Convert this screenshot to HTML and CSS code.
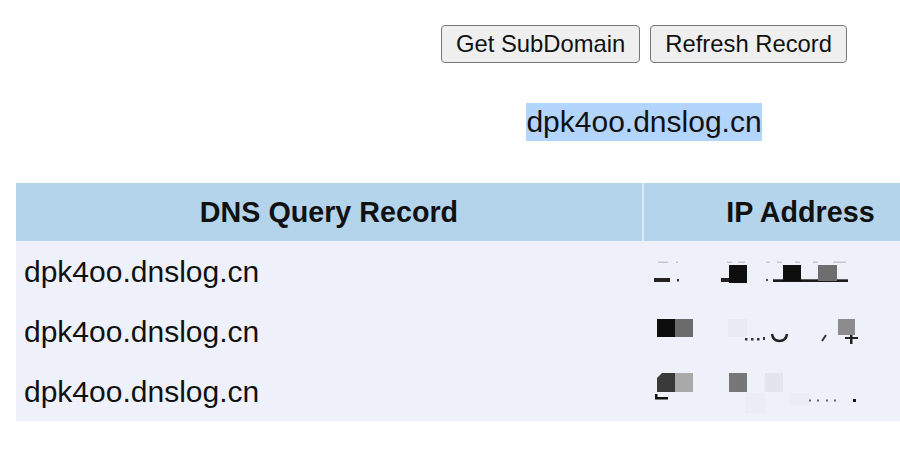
FILE: index.html
```html
<!DOCTYPE html>
<html lang="en">
<head>
<meta charset="utf-8">
<title>DNSLog</title>
<link rel="stylesheet" href="styles.css">
</head>
<body>
<div class="page">
  <div class="actions">
    <button class="btn" type="button">Get SubDomain</button><button class="btn" type="button">Refresh Record</button>
  </div>
  <div class="domain"><span class="selected">dpk4oo.dnslog.cn</span></div>
  <table class="records">
    <colgroup><col class="col-domain"><col class="col-ip"></colgroup>
    <thead>
      <tr><th class="th-domain">DNS Query Record</th><th>IP Address</th></tr>
    </thead>
    <tbody>
      <tr>
        <td class="cell-domain">dpk4oo.dnslog.cn</td>
        <td class="cell-ip">
          <svg class="redact" width="230" height="60" viewBox="0 0 230 60">
            <g fill="#c4c6cc">
              <rect x="14" y="20.5" width="10" height="1.5"/><rect x="32" y="20.5" width="2" height="1.5"/>
              <rect x="83" y="20.5" width="5" height="1.5"/><rect x="94" y="20.5" width="7" height="1.5"/>
              <rect x="122" y="20.5" width="4" height="1.5"/><rect x="133" y="20.5" width="5" height="1.5"/>
              <rect x="151" y="20.5" width="5" height="1.5"/><rect x="169" y="20.5" width="5" height="1.5"/>
              <rect x="189" y="20.5" width="13" height="1.5"/>
            </g>
            <rect x="10" y="37" width="16" height="4" fill="#222"/>
            <rect x="33" y="38" width="2" height="2.5" fill="#333"/>
            <rect x="77" y="37" width="14" height="4" fill="#222"/>
            <rect x="85" y="24" width="18" height="18" fill="#0e0e0e"/>
            <rect x="129" y="38.3" width="75" height="2.7" fill="#1c1c1c"/>
            <rect x="139" y="24" width="18" height="16" fill="#0e0e0e"/>
            <rect x="174" y="24" width="19" height="16" fill="#6e6e6e"/>
            <rect x="122" y="38" width="2" height="2" fill="#555"/>
          </svg>
        </td>
      </tr>
      <tr>
        <td class="cell-domain">dpk4oo.dnslog.cn</td>
        <td class="cell-ip">
          <svg class="redact" width="230" height="60" viewBox="0 0 230 60">
            <rect x="13" y="18" width="18" height="18" fill="#0d0d0d"/>
            <rect x="31" y="18" width="18" height="18" fill="#6b6b6b"/>
            <rect x="84" y="18" width="19" height="18" fill="#e8ebf3"/>
            <g fill="#333">
              <rect x="101" y="37" width="2.5" height="2.5"/><rect x="107" y="37" width="2.5" height="2.5"/>
              <rect x="113" y="37" width="2.5" height="2.5"/><rect x="119" y="36" width="2" height="3"/>
            </g>
            <path d="M128 33 Q129 40 135.5 40 Q142 40 143 33" fill="none" stroke="#222" stroke-width="2.5"/>
            <path d="M182 34 L178 40" fill="none" stroke="#333" stroke-width="2"/>
            <rect x="201" y="36" width="13" height="2" fill="#222"/>
            <rect x="206" y="33" width="2.5" height="10" fill="#222"/>
            <rect x="194" y="18" width="17" height="16" fill="#8c8c8c"/>
          </svg>
        </td>
      </tr>
      <tr>
        <td class="cell-domain">dpk4oo.dnslog.cn</td>
        <td class="cell-ip">
          <svg class="redact" width="230" height="60" viewBox="0 0 230 60">
            <path d="M13 17 L18 12 L31 12 L31 31 L13 31 Z" fill="#3a3a3a"/>
            <rect x="31" y="12" width="18" height="19" fill="#a9a9a9"/>
            <rect x="11" y="33" width="2.5" height="5" fill="#111"/>
            <rect x="11" y="36" width="13" height="2.5" fill="#111"/>
            <rect x="85" y="12" width="18" height="19" fill="#777"/>
            <rect x="121" y="12" width="18" height="19" fill="#e3e5ed"/>
            <rect x="101" y="32" width="20" height="20" fill="#ebedf5"/>
            <rect x="145" y="32" width="20" height="12" fill="#ebedf5"/>
            <g fill="#666">
              <rect x="165" y="38.5" width="2" height="2"/><rect x="173" y="38.5" width="2" height="2"/>
              <rect x="182" y="38.5" width="2" height="2"/><rect x="190" y="38.5" width="2" height="2"/>
            </g>
            <rect x="209" y="38" width="3" height="3" fill="#111"/>
          </svg>
        </td>
      </tr>
    </tbody>
  </table>
</div>
</body>
</html>
```

FILE: styles.css
```css
html, body {
  margin: 0;
  padding: 0;
  overflow: hidden;
  background: #ffffff;
}

body {
  font-family: "Liberation Sans", Arial, Helvetica, sans-serif;
  color: #111111;
}

.page {
  width: 1256px;
  padding: 25px 16px 0 16px;
  text-align: center;
}

.actions {
  display: flex;
  justify-content: center;
  gap: 10px;
}

.btn {
  font-family: "Liberation Sans", Arial, Helvetica, sans-serif;
  font-size: 23.8px;
  color: #111111;
  height: 38px;
  padding: 0 14px;
  background: #efefef;
  border: 1px solid #767676;
  border-radius: 4px;
  line-height: 36px;
}

.domain {
  margin-top: 40px;
  height: 38px;
  font-size: 30px;
}

.selected {
  display: inline-block;
  background: #b4d5fb;
  line-height: 30px;
  padding: 3.5px 0 4.5px 0;
}

.records {
  margin-top: 42px;
  table-layout: fixed;
  width: 941px;
  border-collapse: separate;
  border-spacing: 0;
  text-align: left;
}

.col-domain { width: 628px; }
.col-ip { width: 313px; }

.records th {
  background: #b4d4ec;
  height: 58px;
  padding: 0;
  font-size: 28.7px;
  font-weight: bold;
  text-align: center;
  vertical-align: middle;
}

.records .th-domain {
  border-right: 2px solid #d9e9f6;
}

.records td {
  background: #eef1fa;
  height: 60px;
  padding: 0;
  vertical-align: middle;
}

.cell-domain {
  font-size: 30px;
  padding: 2px 0 0 8px !important;
  box-sizing: border-box;
}

.cell-ip {
  vertical-align: top;
}

.redact {
  display: block;
}
```
